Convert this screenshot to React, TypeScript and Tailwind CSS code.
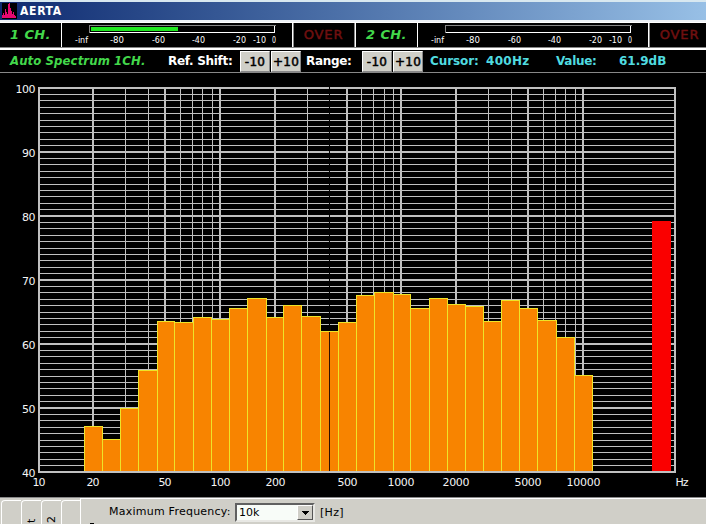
import React from 'react';

interface Band {
    x: number;
    top: number;
}

// Left edge and top of every third-octave band, in plot pixels
const BANDS: Band[] = [
    { x: 84, top: 426 }, { x: 102, top: 439 }, { x: 120, top: 408 }, { x: 138, top: 370 },
    { x: 157, top: 321 }, { x: 174, top: 322 }, { x: 193, top: 317 }, { x: 211, top: 319 },
    { x: 229, top: 308 }, { x: 247, top: 298 }, { x: 266, top: 317 }, { x: 283, top: 305 },
    { x: 301, top: 316 }, { x: 320, top: 331 }, { x: 338, top: 322 }, { x: 356, top: 295 },
    { x: 374, top: 292 }, { x: 393, top: 294 }, { x: 410, top: 308 }, { x: 429, top: 298 },
    { x: 447, top: 304 }, { x: 465, top: 306 }, { x: 483, top: 321 }, { x: 501, top: 300 },
    { x: 519, top: 308 }, { x: 537, top: 320 }, { x: 556, top: 337 }, { x: 574, top: 375 },
];
const BANDS_END = 592;

const MAJOR_X = [38, 92, 164, 219, 274, 346, 400, 455, 527, 582, 674];
const MINOR_X = [125, 148, 180, 192, 202, 212, 307, 329, 361, 373, 384, 393, 488, 511, 543, 555, 565, 575];
const MINOR_Y = [7, 13, 20, 26, 33, 39, 45, 52, 58];
const LEVELS = [100, 90, 80, 70, 60, 50, 40];

const FREQUENCIES = [
    { label: '10', x: 39, width: 13 },
    { label: '20', x: 93, width: 13 },
    { label: '50', x: 165, width: 13 },
    { label: '100', x: 220.5, width: 20 },
    { label: '200', x: 275.5, width: 20 },
    { label: '500', x: 347.5, width: 20 },
    { label: '1000', x: 401, width: 27 },
    { label: '2000', x: 456, width: 27 },
    { label: '5000', x: 528, width: 27 },
    { label: '10000', x: 583.5, width: 34 },
    { label: 'Hz', x: 682, width: 13 },
];

const METER_TICKS = [
    { label: '-inf', x: 13, width: 13 },
    { label: '-80', x: 48, width: 14 },
    { label: '-60', x: 90, width: 13 },
    { label: '-40', x: 130, width: 13 },
    { label: '-20', x: 171, width: 13 },
    { label: '-10', x: 191, width: 13 },
    { label: '0', x: 210, width: 4 },
];

const LevelMeter: React.FC<{ level: number }> = ({ level }) => (
    <svg width="230" height="24" className="shrink-0 bg-black" shapeRendering="crispEdges">
        <path d="M27 9V2H213" transform="translate(.5 .5)" fill="none" stroke="#858585" />
        <path d="M27 9H212V2" transform="translate(.5 .5)" fill="none" stroke="#fff" />
        <rect x="29" y="4" width={level} height="4" fill="#20e820" />
        {METER_TICKS.map(tick => (
            <text key={tick.label} x={tick.x} y="20" textLength={tick.width} lengthAdjust="spacingAndGlyphs" fill="#fff" fontSize="8" className="font-['DejaVu_Sans']">
                {tick.label}
            </text>
        ))}
    </svg>
);

const Channel: React.FC<{ name: string; level: number }> = ({ name, level }) => (
    <>
        <div className="w-[62px] shrink-0 h-6 bg-black flex items-center justify-center text-[13px] tracking-[0.4px] font-bold italic text-[#43d84b] border-r border-white">
            {name}
        </div>
        <LevelMeter level={level} />
        <div className="w-[62px] shrink-0 h-6 bg-black border-l border-white shadow-[inset_1px_0_0_#888] flex items-center justify-center text-[13px] tracking-[0.9px] text-[#701010] [-webkit-text-stroke:0.5px]">
            OVER
        </div>
    </>
);

const StepButton: React.FC<{ label: string }> = ({ label }) => (
    <button className="w-[30px] h-[21px] shrink-0 bg-[#d0cfc8] border border-t-white border-l-white border-r-[#888] border-b-[#888] text-black text-[12px] leading-[20px] font-normal tracking-[0.3px] [-webkit-text-stroke:0.5px] whitespace-nowrap flex justify-center">
        {label}
    </button>
);

const Spectrum = () => (
    <svg width="706" height="424" viewBox="0 73 706 424" className="block bg-black font-['DejaVu_Sans']">
        <g fill="#c0c0c0" shapeRendering="crispEdges">
            {LEVELS.map((level, i) => (
                <rect key={level} x="38" y={87 + i * 64} width="638" height="2" />
            ))}
            {LEVELS.slice(1).map((level, i) =>
                MINOR_Y.map(dy => <rect key={`${level}-${dy}`} x="38" y={87 + i * 64 + dy} width="638" height="1" />)
            )}
            {MAJOR_X.map(x => <rect key={x} x={x} y="87" width="2" height="386" />)}
            {MINOR_X.map(x => <rect key={x} x={x} y="87" width="1" height="386" />)}
        </g>

        {/* Cursor */}
        <rect x="329" y="87" width="1" height="245" fill="#000" shapeRendering="crispEdges" />

        {/* Bands */}
        <g fill="#f88400" stroke="#eee428" shapeRendering="crispEdges">
            {BANDS.map((band, i) => {
                const next = BANDS[i + 1]?.x ?? BANDS_END;
                return <path key={band.x} d={`M${band.x + 0.5} 471V${band.top + 0.5}H${next + 0.5}V471`} />;
            })}
        </g>
        <rect x="329" y="332" width="1" height="139" fill="#301000" shapeRendering="crispEdges" />
        <rect x="652" y="221" width="19" height="250" fill="#fa0000" shapeRendering="crispEdges" />

        <g fill="#f4f4f4" fontSize="11">
            {LEVELS.map((level, i) => (
                <text key={level} x={level === 100 ? 15.5 : 22} y={93 + i * 64} textLength={level === 100 ? 20 : 13.5}>{level}</text>
            ))}
            {FREQUENCIES.map(f => (
                <text key={f.label} x={f.x} y="486" textAnchor="middle" textLength={f.width}>{f.label}</text>
            ))}
        </g>
    </svg>
);

const SideTab: React.FC<{ label?: string }> = ({ label }) => (
    <div className="w-5 h-6 shrink-0 border-l border-t border-white rounded-tl-sm overflow-hidden flex justify-center pt-[14px]">
        <span className="[writing-mode:vertical-rl] rotate-180 h-2 leading-none text-[11px]">{label}</span>
    </div>
);

const App = () => (
    <div className="w-[706px] h-[524px] overflow-hidden bg-black font-['DejaVu_Sans',sans-serif] flex flex-col">
        {/* Title bar */}
        <div className="h-[22px] shrink-0 border-t-2 border-b-2 border-t-[#d8e8f0] border-b-[#eef2f6] bg-linear-to-r from-[#102a70] to-[#98c0e6] flex items-center pl-0.5 gap-[3px]">
            <svg width="15" height="16" viewBox="0 0 15 16" className="bg-black" shapeRendering="crispEdges">
                <path d="M0 15V12H1V10H2V12H3V6H4V9H5V11H6V1H7V0H8V5H9V8H10V11H11V9H12V12H13V13H14V15Z" fill="#e80870" />
            </svg>
            <span className="text-[12px] font-bold text-white font-['DejaVu_Sans_Condensed','DejaVu_Sans'] [font-stretch:condensed] tracking-[0.7px]">AERTA</span>
        </div>

        {/* Level meters */}
        <div className="h-7 shrink-0 border-t border-t-white border-b-2 border-b-white bg-[#858585] flex items-start">
            <Channel name="1 CH." level={87} />
            <div className="w-0.5 h-6 shrink-0 border-l border-l-[#888] border-r border-r-white"></div>
            <Channel name="2 CH." level={0} />
        </div>

        {/* Toolbar */}
        <div className="h-[23px] shrink-0 border-b border-[#888] flex items-center text-[12px] font-bold text-white whitespace-nowrap">
            <div className="w-[168px] shrink-0 pl-2.5 italic text-[13px] tracking-[0.1px] font-['DejaVu_Sans_Condensed','DejaVu_Sans'] [font-stretch:condensed] text-[#43d84b]">Auto Spectrum 1CH.</div>
            <div className="w-[72px] shrink-0 tracking-[-0.3px]">Ref. Shift:</div>
            <div className="w-[66px] shrink-0 flex gap-px pt-px">
                <StepButton label="-10" />
                <StepButton label="+10" />
            </div>
            <div className="w-14 shrink-0 tracking-[-0.3px]">Range:</div>
            <div className="w-[68px] shrink-0 flex gap-px pt-px">
                <StepButton label="-10" />
                <StepButton label="+10" />
            </div>
            <div className="w-14 shrink-0 tracking-[-0.1px] text-[#50dce0]">Cursor:</div>
            <div className="w-[70px] shrink-0 tracking-[0.3px] text-[#50dce0]">400Hz</div>
            <div className="w-[63px] shrink-0 tracking-[-0.3px] text-[#50dce0]">Value:</div>
            <div className="text-[#50dce0]">61.9dB</div>
        </div>

        <Spectrum />

        {/* Settings */}
        <div className="h-[27px] shrink-0 bg-[#d0cfc8] border-t border-[#888] text-black text-[11px] flex overflow-hidden">
            <div className="w-20 shrink-0 flex pt-0.5 pl-px">
                <SideTab />
                <SideTab label="t" />
                <SideTab label="2" />
                <SideTab />
            </div>
            <div className="flex-1 border-t border-l border-white flex items-start pt-1">
                <div className="w-7 h-[21px] shrink-0 flex items-end pl-[9px]">
                    <div className="w-1 h-px bg-black"></div>
                </div>
                <div className="w-[126px] shrink-0 pt-px tracking-[0.24px] whitespace-nowrap">Maximum Frequency:</div>
                <div className="w-20 h-[19px] shrink-0 bg-[#f8fcf8] border-2 border-t-[#606060] border-l-[#606060] border-r-[#e8e8e4] border-b-[#e8e8e4] flex items-center justify-between pl-0.5">
                    <span className="pt-0.5">10k</span>
                    <div className="w-4 h-[15px] bg-[#d0cfc8] border border-t-white border-l-white border-r-[#555] border-b-[#555] flex items-center justify-center">
                        <svg width="7" height="4" shapeRendering="crispEdges">
                            <path d="M0 0H7L3.5 4Z" />
                        </svg>
                    </div>
                </div>
                <span className="pl-[5px] pt-0.5 tracking-[0.3px]">[Hz]</span>
            </div>
        </div>
    </div>
);

export default App;
